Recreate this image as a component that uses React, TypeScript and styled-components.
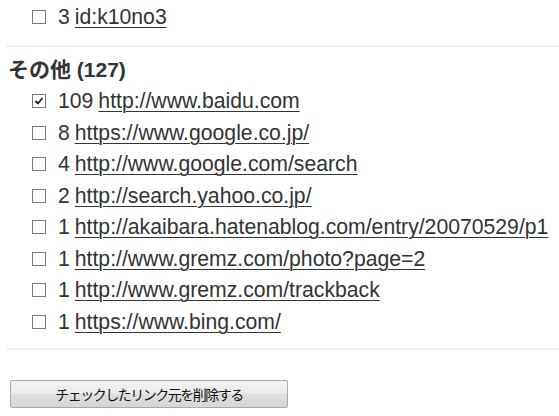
import React from 'react';
import styled, { createGlobalStyle } from 'styled-components';

const GlobalStyle = createGlobalStyle`
    body {
        margin: 0;
        background: #fff;
        font-family: "Liberation Sans", "Noto Sans CJK JP", sans-serif;
        color: #333;
    }
`;

type Referer = {
    count: number;
    url: string;
    checked?: boolean;
};

const OTHERS: Referer[] = [
    { count: 109, url: 'http://www.baidu.com', checked: true },
    { count: 8, url: 'https://www.google.co.jp/' },
    { count: 4, url: 'http://www.google.com/search' },
    { count: 2, url: 'http://search.yahoo.co.jp/' },
    { count: 1, url: 'http://akaibara.hatenablog.com/entry/20070529/p1' },
    { count: 1, url: 'http://www.gremz.com/photo?page=2' },
    { count: 1, url: 'http://www.gremz.com/trackback' },
    { count: 1, url: 'https://www.bing.com/' },
];

const Page = styled.div`
    padding: 1px 0 0 8px;
`;

const List = styled.ul`
    list-style: none;
    margin: 0;
    padding: 0 0 0 24px;
`;

const Row = styled.li`
    display: flex;
    align-items: center;
    height: 31.5px;
    font-size: 21.2px;
    white-space: nowrap;
`;

const Box = styled.span<{ $checked?: boolean }>`
    display: inline-flex;
    align-items: center;
    justify-content: center;
    box-sizing: border-box;
    width: 14px;
    height: 14px;
    border: 1px solid #7a7a7a;
    background: #fff;
    margin-right: 12px;
    flex: none;
`;

const Count = styled.span`
    margin-right: 5px;
`;

const Link = styled.a`
    color: #333;
    text-decoration: underline;
    text-underline-offset: 3px;
    text-decoration-thickness: 1px;
`;

const Divider = styled.hr<{ $top: number; $bottom: number }>`
    border: none;
    border-top: 2px solid #f1f1f1;
    margin: ${p => p.$top}px 0 ${p => p.$bottom}px -2px;
`;

const Heading = styled.h3`
    margin: 0 0 3px;
    height: 26px;
    line-height: 26px;
    font-size: 21px;
    font-weight: bold;
    color: #333;
`;

const Button = styled.button`
    display: block;
    margin-left: 2px;
    width: 278px;
    height: 28px;
    border: 1px solid #a9a9a9;
    border-radius: 2px;
    background: linear-gradient(#f2f2f2 0%, #ebebeb 50%, #dfdfdf 51%, #d6d6d6 100%);
    font-family: "Noto Sans CJK JP", sans-serif;
    font-size: 14px;
    letter-spacing: -1.5px;
    color: #111;
    padding: 0;
`;

const CheckMark = () => (
    <svg width="10" height="10" viewBox="0 0 10 10">
        <path d="M1.5 5 L4 7.5 L8.5 2" fill="none" stroke="#222" strokeWidth="1.8" />
    </svg>
);

const RefRow = ({ item }: { item: Referer }) => (
    <Row>
        <Box $checked={item.checked}>{item.checked ? <CheckMark /> : null}</Box>
        <Count>{item.count}</Count>
        <Link href="#">{item.url}</Link>
    </Row>
);

export default function App() {
    return (
        <Page>
            <GlobalStyle />
            <List>
                <RefRow item={{ count: 3, url: 'id:k10no3' }} />
            </List>
            <Divider $top={12} $bottom={10} />
            <Heading>その他 (127)</Heading>
            <List>
                {OTHERS.map((item, i) => <RefRow key={i} item={item} />)}
            </List>
            <Divider $top={10} $bottom={30} />
            <Button>チェックしたリンク元を削除する</Button>
        </Page>
    );
}
